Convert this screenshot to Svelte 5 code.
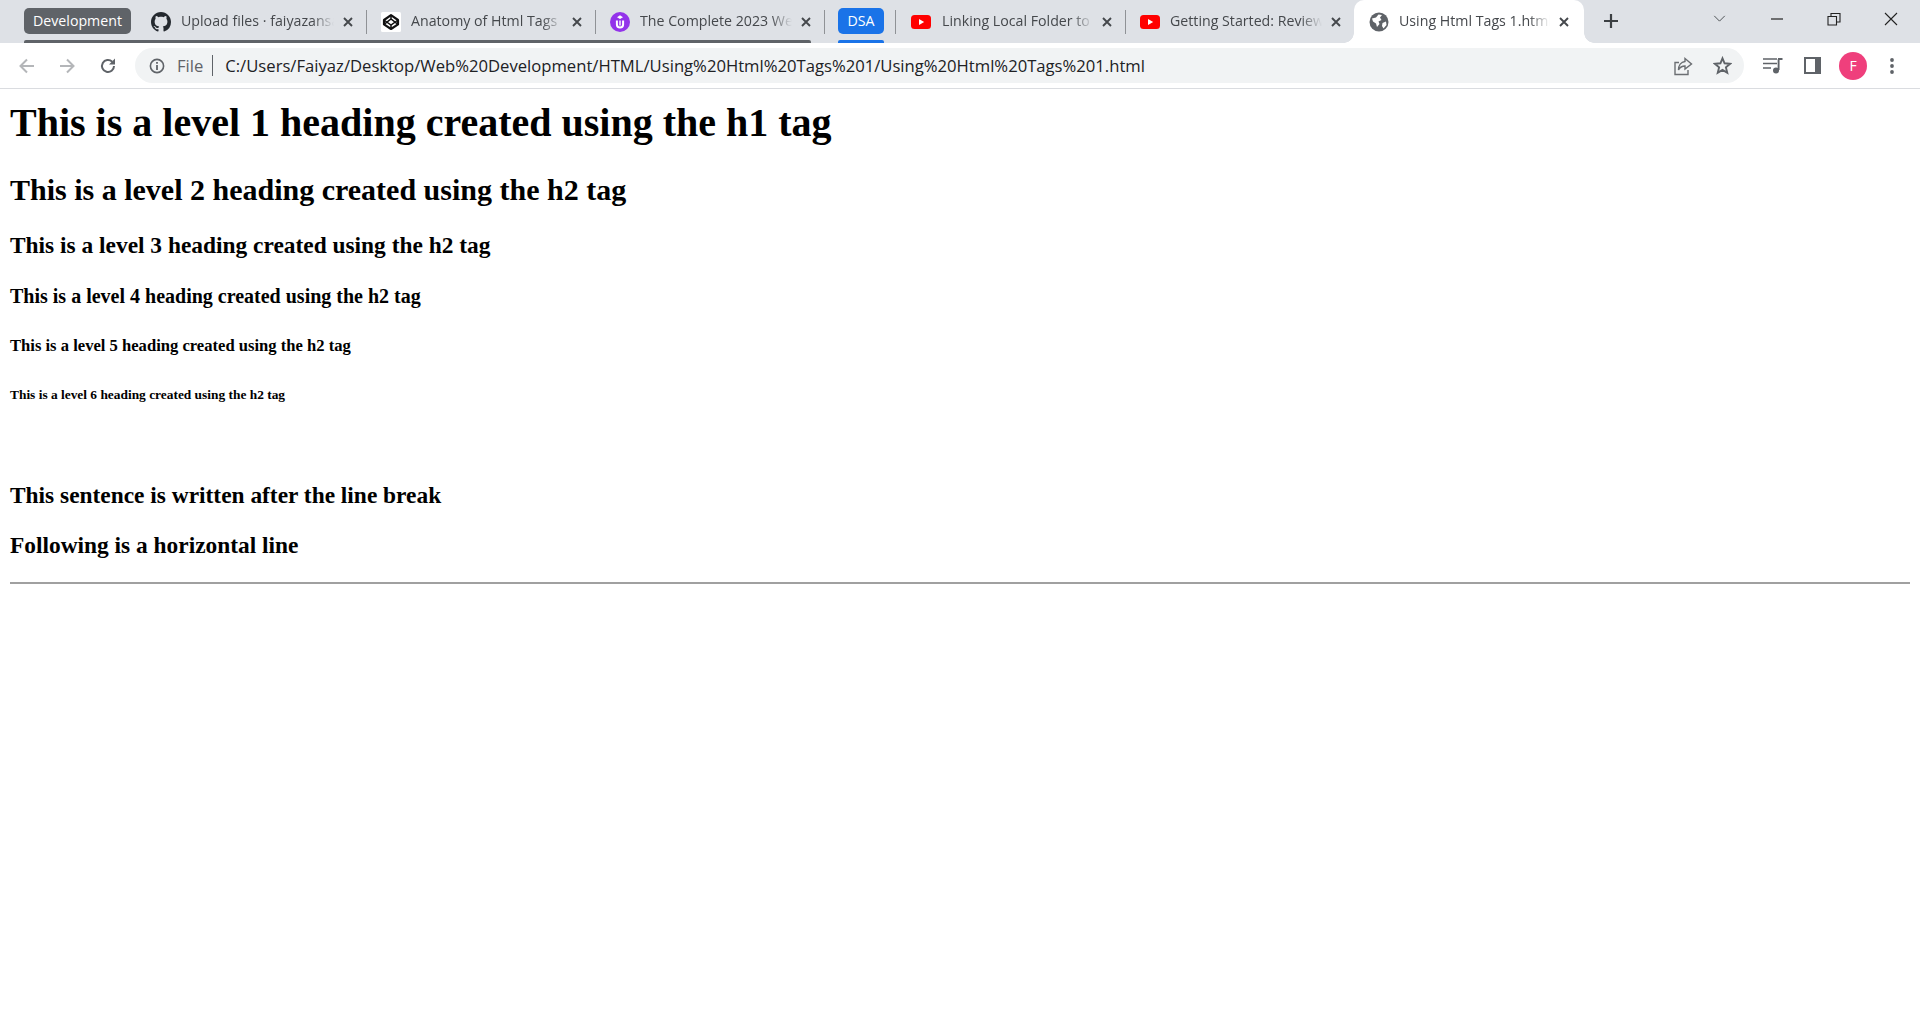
<script>
  const tabs1 = [
    { icon: 'gh', title: 'Upload files · faiyazansari' },
    { icon: 'cp', title: 'Anatomy of Html Tags' },
    { icon: 'ud', title: 'The Complete 2023 Web Development' }
  ];
  const tabs2 = [
    { icon: 'yt', title: 'Linking Local Folder to GitHub' },
    { icon: 'yt', title: 'Getting Started: Review and more' }
  ];
</script>

{#snippet icon(kind)}
  {#if kind === 'gh'}
    <svg class="fav" viewBox="0 0 16 16"><path fill="#24292f" d="M8 0C3.58 0 0 3.58 0 8c0 3.54 2.29 6.53 5.47 7.59.4.07.55-.17.55-.38 0-.19-.01-.82-.01-1.49-2.01.37-2.53-.49-2.69-.94-.09-.23-.48-.94-.82-1.13-.28-.15-.68-.52-.01-.53.63-.01 1.08.58 1.23.82.72 1.21 1.87.87 2.33.66.07-.52.28-.87.51-1.07-1.78-.2-3.64-.89-3.64-3.95 0-.87.31-1.59.82-2.15-.08-.2-.36-1.02.08-2.12 0 0 .67-.21 2.2.82.64-.18 1.32-.27 2-.27s1.36.09 2 .27c1.53-1.04 2.2-.82 2.2-.82.44 1.1.16 1.92.08 2.12.51.56.82 1.27.82 2.15 0 3.07-1.87 3.75-3.65 3.95.29.25.54.73.54 1.48 0 1.07-.01 1.93-.01 2.2 0 .21.15.46.55.38A8.01 8.01 0 0 0 16 8c0-4.42-3.58-8-8-8z"/></svg>
  {:else if kind === 'cp'}
    <svg class="fav" viewBox="0 0 20 20"><rect width="20" height="20" rx="1.5" fill="#fff"/><path d="M10 3.2 17 8v4.4L10 17 3 12.4V8z" fill="none" stroke="#111" stroke-width="2.2" stroke-linejoin="round"/><path d="M10 3.2V7M10 13v3.8M3 8l7 5 7-5M3 12.4 10 7l7 5.4" fill="none" stroke="#111" stroke-width="1.5"/></svg>
  {:else if kind === 'ud'}
    <svg class="fav" viewBox="0 0 20 20"><circle cx="10" cy="10" r="10" fill="#9333ea"/><path d="M6.9 8.4v4a3.1 3.1 0 0 0 6.2 0v-4" fill="none" stroke="#fff" stroke-width="2"/><path d="M10 3.2 13 5.2 10 7 7 5.2z" fill="#fff"/><path d="M10 8.5v5" stroke="#fff" stroke-width="1.4"/></svg>
  {:else if kind === 'yt'}
    <svg class="fav" viewBox="0 0 20 20"><rect y="3" width="20" height="14" rx="3.5" fill="#f00"/><path d="M8 7 13.2 10 8 13z" fill="#fff"/></svg>
  {:else}
    <svg class="fav globe" viewBox="0 0 20 20"><circle cx="10" cy="10" r="9.5" fill="#5f6368"/><path fill="#fff" d="M3 6.5 7 5.5 9.5 2.5 13 3 11 5.5 12.5 8 9.5 9.5 10.5 12 8 15 7 11.5 4 9.5zM13.5 11 17 9.5 17.5 13 14.5 16.5 13 14z"/></svg>
  {/if}
{/snippet}

{#snippet close()}
  <svg class="x" viewBox="0 0 10 10"><path d="M1 1 9 9M9 1 1 9" stroke="#45484c" stroke-width="1.9" fill="none"/></svg>
{/snippet}

{#snippet tab(t)}
  <div class="tab">
    {@render icon(t.icon)}
    <span class="title">{t.title}</span>
    {@render close()}
  </div>
{/snippet}

<div class="chrome">
  <div class="strip">
    <div class="group">
      <span class="chip grey">Development</span>
      <div class="line grey-line"></div>
    </div>
    {#each tabs1 as t}{@render tab(t)}{/each}
    <div class="group dsa">
      <span class="chip blue">DSA</span>
      <div class="line blue-line"></div>
    </div>
    {#each tabs2 as t}{@render tab(t)}{/each}
    <div class="tab active">
      {@render icon('globe')}
      <span class="title">Using Html Tags 1.html</span>
      {@render close()}
    </div>
    <svg class="plus" viewBox="0 0 14 14"><path d="M7 0v14M0 7h14" stroke="#3c4043" stroke-width="2.2"/></svg>
    <div class="win">
      <svg class="caret" viewBox="0 0 14 8"><path d="M1 1l6 6 6-6" fill="none" stroke="#3c4043" stroke-width="1"/></svg>
      <svg class="wbtn w1" viewBox="0 0 14 14"><path d="M1 7h12" stroke="#222" stroke-width="1.2"/></svg>
      <svg class="wbtn w2" viewBox="0 0 14 14"><path d="M1 4.5h8.5V13H1zM4 4.5V1.5h9v8.5h-3.5" fill="none" stroke="#222" stroke-width="1.1"/></svg>
      <svg class="wbtn w3" viewBox="0 0 14 14"><path d="M1 1 13 13M13 1 1 13" stroke="#222" stroke-width="1.1"/></svg>
    </div>
  </div>

  <div class="toolbar">
    <svg class="nav back" viewBox="0 0 18 18"><path d="M16 9H3M9 2.5 2.5 9 9 15.5" fill="none" stroke="#b4b6b9" stroke-width="2"/></svg>
    <svg class="nav fwd" viewBox="0 0 18 18"><path d="M2 9h13M9 2.5 15.5 9 9 15.5" fill="none" stroke="#b4b6b9" stroke-width="2"/></svg>
    <svg class="nav reload" viewBox="0 0 18 18"><path d="M15 9a6 6 0 1 1-1.8-4.3" fill="none" stroke="#5f6368" stroke-width="2"/><path d="M16 1.5v6h-6z" fill="#5f6368"/></svg>
    <div class="omni">
      <svg class="info" viewBox="0 0 16 16"><circle cx="8" cy="8" r="6.6" fill="none" stroke="#5f6368" stroke-width="1.6"/><path d="M8 7v5M8 4v1.8" stroke="#5f6368" stroke-width="1.8"/></svg>
      <span class="file">File</span>
      <span class="bar"></span>
      <span class="url">C:/Users/Faiyaz/Desktop/Web%20Development/HTML/Using%20Html%20Tags%201/Using%20Html%20Tags%201.html</span>
      <svg class="share" viewBox="0 0 20 20"><path d="M6 6.5H2v12h13V14" fill="none" stroke="#6b6e72" stroke-width="1.4"/><path d="M12 2.5 18.5 8 12 13v-3C9 10 7 11 5.5 14 5.5 9.5 8 6 12 5.5z" fill="none" stroke="#6b6e72" stroke-width="1.4"/></svg>
      <svg class="star" viewBox="0 0 20 20"><path d="M10 2.4 12.2 7.7 18 8.2 13.6 12 15 17.6 10 14.6 5 17.6 6.4 12 2 8.2 7.8 7.7z" fill="none" stroke="#5f6368" stroke-width="2"/></svg>
    </div>
    <svg class="tool media" viewBox="0 0 20 16"><path d="M0 1h14M0 5.5h14M0 10h8" stroke="#5f6368" stroke-width="1.6"/><path d="M15 1h4.5M15.6 1v11" stroke="#5f6368" stroke-width="1.9"/><circle cx="13" cy="12.5" r="3" fill="#5f6368"/></svg>
    <svg class="tool panel" viewBox="0 0 17 17"><rect x="1" y="1" width="15" height="15" fill="none" stroke="#5f6368" stroke-width="2"/><rect x="11" y="0" width="6" height="17" fill="#5f6368"/></svg>
    <span class="avatar">F</span>
    <svg class="tool menu" viewBox="0 0 4 16"><circle cx="2" cy="2" r="1.9" fill="#5f6368"/><circle cx="2" cy="8" r="1.9" fill="#5f6368"/><circle cx="2" cy="14" r="1.9" fill="#5f6368"/></svg>
  </div>
</div>

<main>
  <h1>This is a level 1 heading created using the h1 tag</h1>
  <h2>This is a level 2 heading created using the h2 tag</h2>
  <h3>This is a level 3 heading created using the h2 tag</h3>
  <h4>This is a level 4 heading created using the h2 tag</h4>
  <h5>This is a level 5 heading created using the h2 tag</h5>
  <h6>This is a level 6 heading created using the h2 tag</h6>
  <br />
  <h3>This sentence is written after the line break</h3>
  <h3>Following is a horizontal line</h3>
  <hr />
</main>

<style>
  :global(body) { background: #fff; font-family: "Liberation Serif", serif; }
  .chrome { font-family: "Open Sans", "Noto Sans", sans-serif; }
  .strip { height: 43px; background: #dee1e6; display: flex; padding-left: 24px; position: relative; }
  .group { width: 113px; position: relative; display: flex; align-items: flex-start; flex: none; }
  .chip { height: 26px; margin-top: 8px; padding-bottom: 2px; box-sizing: border-box; border-radius: 5px; color: #fff; font-size: 14.2px; display: flex; align-items: center; justify-content: center; }
  .grey { background: #5f6368; width: 107px; }
  .blue { background: #1a73e8; width: 46px; }
  .dsa { width: 58px; margin-left: 14px; }
  .dsa::after { content: ""; position: absolute; right: 0; top: 10px; height: 24px; width: 1px; background: #8f9296; }
  .line { position: absolute; bottom: 0; height: 3px; border-radius: 2px 2px 0 0; }
  .grey-line { left: 0; width: 787px; background: #5f6368; }
  .blue-line { left: 0; width: 46px; background: #1a73e8; }
  .tab { width: 229px; flex: none; height: 43px; display: flex; align-items: center; padding: 0 13px 0 15px; box-sizing: border-box; position: relative; }
  .tab:not(.active)::after { content: ""; position: absolute; right: -1px; top: 10px; height: 24px; width: 1px; background: #8f9296; }
  .group + .tab { padding-left: 14px; }
  .dsa + .tab { padding-left: 15px; }
  .fav { width: 20px; height: 20px; flex: none; margin-right: 10px; }
  .dsa + .tab .fav { margin-right: 11px; }
  .title { flex: 1; min-width: 0; margin-top: -2px; white-space: nowrap; overflow: hidden; font-size: 14.2px; color: #45484c; -webkit-mask-image: linear-gradient(to right, #000 86%, transparent 100%); mask-image: linear-gradient(to right, #000 86%, transparent 100%); }
  .x { width: 10px; height: 10px; flex: none; margin-left: 9px; }
  .active { background: #fff; width: 230px; border-radius: 10px 10px 0 0; padding-right: 15px; }
  .active::before, .active::after { content: ""; position: absolute; bottom: 0; width: 10px; height: 10px; }
  .active::before { left: -10px; background: radial-gradient(circle at 0 0, #dee1e6 9.5px, #fff 10px); }
  .active::after { right: -10px; background: radial-gradient(circle at 100% 0, #dee1e6 9.5px, #fff 10px); }
  .plus { position: absolute; left: 1604px; top: 14px; width: 14px; height: 14px; }
  .win svg { position: absolute; }
  .caret { left: 1713px; top: 15px; width: 13px; height: 7px; }
  .wbtn { width: 14px; height: 14px; top: 12px; }
  .w1 { left: 1770px; }
  .w2 { left: 1827px; }
  .w3 { left: 1884px; }
  .toolbar { height: 45px; border-bottom: 1px solid #dadce0; display: flex; align-items: center; background: #fff; position: relative; }
  .nav { width: 18px; height: 18px; flex: none; }
  .back { margin-left: 18px; }
  .fwd { margin-left: 22px; }
  .reload { margin-left: 23px; }
  .omni { margin-left: 18px; width: 1609px; height: 35px; background: #f1f3f4; border-radius: 18px; display: flex; align-items: center; flex: none; }
  .info { width: 16px; height: 16px; margin-left: 14px; flex: none; }
  .file { margin-left: 12px; font-size: 16.6px; color: #5f6368; }
  .bar { width: 1px; height: 21px; background: #5f6368; margin-left: 9px; }
  .url { margin-left: 12px; font-size: 16.65px; color: #202124; white-space: nowrap; flex: 1; }
  .share { width: 20px; height: 20px; margin-right: 20px; flex: none; }
  .star { width: 19px; height: 19px; margin-right: 12px; flex: none; }
  .tool { flex: none; }
  .media { width: 20px; height: 16px; margin-left: 19px; }
  .panel { width: 17px; height: 17px; margin-left: 21px; }
  .avatar { width: 28px; height: 28px; margin-left: 18px; border-radius: 50%; background: #ef3f7c; color: #fff; font-size: 14px; display: flex; align-items: center; justify-content: center; flex: none; }
  .menu { width: 4px; height: 16px; margin-left: 23px; }
  main { padding: 10px 10px 0; }
  h1, h2, h3, h4, h5, h6 { font-weight: 700; color: #000; }
  h1 { font-size: 40px; margin: 0 0 26.8px; }
  h2 { font-size: 30px; margin: 24.9px 0; }
  h3 { font-size: 23.4px; margin: 23.4px 0; }
  h4 { font-size: 20px; margin: 26.6px 0; }
  h5 { font-size: 16.6px; margin: 27.7px 0; }
  h6 { font-size: 13.4px; margin: 31.2px 0 37px; }
  hr { border: 0; border-top: 2px solid #a0a0a0; margin: 11px 0 0; }
</style>
